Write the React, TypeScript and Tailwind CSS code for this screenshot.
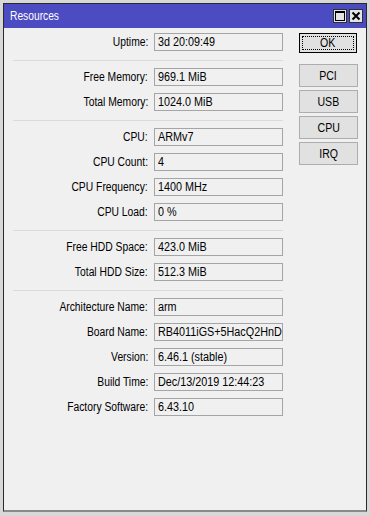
import React from "react";

const FONT = { fontFamily: '"Liberation Sans", Arial, sans-serif' };

type Row = { label: string; value: string } | "sep";

const rows: Row[] = [
  { label: "Uptime:", value: "3d 20:09:49" },
  "sep",
  { label: "Free Memory:", value: "969.1 MiB" },
  { label: "Total Memory:", value: "1024.0 MiB" },
  "sep",
  { label: "CPU:", value: "ARMv7" },
  { label: "CPU Count:", value: "4" },
  { label: "CPU Frequency:", value: "1400 MHz" },
  { label: "CPU Load:", value: "0 %" },
  "sep",
  { label: "Free HDD Space:", value: "423.0 MiB" },
  { label: "Total HDD Size:", value: "512.3 MiB" },
  "sep",
  { label: "Architecture Name:", value: "arm" },
  { label: "Board Name:", value: "RB4011iGS+5HacQ2HnD" },
  { label: "Version:", value: "6.46.1 (stable)" },
  { label: "Build Time:", value: "Dec/13/2019 12:44:23" },
  { label: "Factory Software:", value: "6.43.10" },
];

function Btn({ children }: { children: React.ReactNode }) {
  return (
    <div className="w-[59px] h-[23px] border border-[#adadad] bg-[#e1e1e1] flex items-center justify-center text-[12px] text-black leading-none">
      <span className="inline-block scale-x-[0.88]">{children}</span>
    </div>
  );
}

export default function App() {
  return (
    <div className="w-[370px] h-[516px] bg-[#d8d8d8] overflow-hidden pl-[3px] pt-[3px]" style={FONT}>
      <div className="w-[364px] h-[509px] border border-[#2a2a2a] border-b-[2px] border-b-[#8a8a8a] flex flex-col bg-[#f0f0f0]">
        {/* title bar */}
        <div className="h-[24px] bg-[#4b4bc2] flex items-center pl-[6px] pr-[3px] shrink-0">
          <div className="flex-1 flex">
            <span className="inline-block text-white text-[12.5px] leading-none scale-x-[0.82] origin-left">Resources</span>
          </div>
          <div className="flex gap-[2px]">
            <div className="w-[14px] h-[14px] bg-[#e4e4e4] border border-[#303030] flex items-center justify-center">
              <svg width="10" height="10" viewBox="0 0 10 10">
                <rect x="0.5" y="0.5" width="9" height="9" fill="none" stroke="#000" strokeWidth="1" />
                <rect x="0" y="0" width="10" height="2" fill="#000" />
              </svg>
            </div>
            <div className="w-[14px] h-[14px] bg-[#e4e4e4] border border-[#303030] flex items-center justify-center">
              <svg width="10" height="10" viewBox="0 0 10 10">
                <path d="M1.5 1.5 L8.5 8.5 M8.5 1.5 L1.5 8.5" stroke="#000" strokeWidth="2" />
              </svg>
            </div>
          </div>
        </div>
        {/* body */}
        <div className="flex flex-1 pt-[5px]">
          <div className="w-[279px] flex flex-col gap-[7px]">
            {rows.map((r, i) =>
              r === "sep" ? (
                <div key={i} className="h-[3px] flex items-end pl-[9px]">
                  <div className="w-full h-[1px] bg-[#dadada]" />
                </div>
              ) : (
                <div key={i} className="flex items-center h-[18px]">
                  <div className="w-[145px] flex justify-end pr-[1px]">
                    <span className="inline-block whitespace-nowrap text-[12px] text-black leading-none scale-x-[0.86] origin-right">
                      {r.label}
                    </span>
                  </div>
                  <div className="ml-[5px] w-[129px] h-[18px] border border-[#a5a5a5] bg-[#f0f0f0] flex items-center pl-[3px] overflow-hidden">
                    <span className="inline-block whitespace-nowrap text-[12px] text-black leading-none scale-x-[0.9] origin-left">
                      {r.value}
                    </span>
                  </div>
                </div>
              )
            )}
          </div>
          <div className="ml-[16px] flex flex-col">
            <div className="w-[58px] h-[20px] border border-black bg-[#e1e1e1] p-[2px]">
              <div className="w-full h-full border border-dotted border-black flex items-center justify-center text-[12px] leading-none text-black">
                <span className="inline-block scale-x-[0.88]">OK</span>
              </div>
            </div>
            <div className="mt-[11px] flex flex-col gap-[3px]">
              <Btn>PCI</Btn>
              <Btn>USB</Btn>
              <Btn>CPU</Btn>
              <Btn>IRQ</Btn>
            </div>
          </div>
        </div>
      </div>
    </div>
  );
}
